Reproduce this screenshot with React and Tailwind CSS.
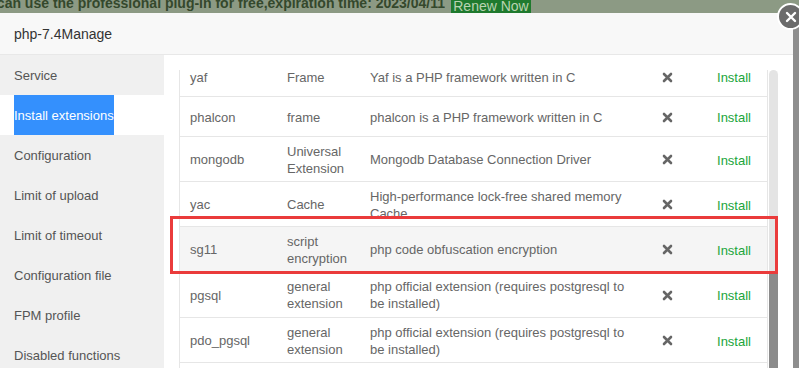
const rows = [
  { name: "yaf", type: ["Frame"], desc: ["Yaf is a PHP framework written in C"], h: "h-[40px]" },
  { name: "phalcon", type: ["frame"], desc: ["phalcon is a PHP framework written in C"], h: "h-[40px]" },
  { name: "mongodb", type: ["Universal", "Extension"], desc: ["Mongodb Database Connection Driver"], h: "h-[45px]" },
  { name: "yac", type: ["Cache"], desc: ["High-performance lock-free shared memory", "Cache"], h: "h-[45px]" },
  { name: "sg11", type: ["script", "encryption"], desc: ["php code obfuscation encryption"], h: "h-[45px]", active: true },
  { name: "pgsql", type: ["general", "extension"], desc: ["php official extension (requires postgresql to", "be installed)"], h: "h-[46px]" },
  { name: "pdo_pgsql", type: ["general", "extension"], desc: ["php official extension (requires postgresql to", "be installed)"], h: "h-[45px]" },
  { name: "imagick", type: ["general", "extension"], desc: ["Imagick image processing extension"], h: "h-[45px]" },
];

const menu = [
  "Service",
  "Install extensions",
  "Configuration",
  "Limit of upload",
  "Limit of timeout",
  "Configuration file",
  "FPM profile",
  "Disabled functions",
];

function Cross() {
  return (
    <svg width="11" height="11" viewBox="0 0 11 11">
      <path d="M2 2 L9 9 M9 2 L2 9" stroke="#666" strokeWidth="2.6" strokeLinecap="round" />
    </svg>
  );
}

export default function App() {
  return (
    <div className="relative w-[799px] h-[368px] overflow-hidden bg-[#8e8e8e] font-['Liberation_Sans',Arial,sans-serif]">
      {/* banner behind the shade */}
      <div className="h-[13px] flex bg-[#8c9a84] overflow-hidden">
        <div className="w-[445px] flex justify-end overflow-hidden">
          <span className="whitespace-nowrap text-[14px] font-bold leading-[14px] -mt-[4px] text-[#34482c]">
            you can use the professional plug-in for free,expiration time: 2023/04/11
          </span>
        </div>
        <div className="ml-[6px] w-[80px] bg-[#1f7a2e] text-[#b9d3b1] text-[14px] leading-[14px] -mt-[2px] pt-[1px] text-center">
          Renew Now
        </div>
      </div>

      <div className="flex h-[355px]">
        {/* dialog */}
        <div className="w-[793px] flex flex-col bg-white">
          <div className="h-[42px] shrink-0 bg-[#f8f8f8] border-b border-[#e8e8e8] flex items-center px-[14px] pt-[1px] text-[14px] text-[#333]">
            php-7.4Manage
          </div>
          <div className="flex flex-1 min-h-0">
            <div className="w-[164px] bg-[#f0f0f0] text-[13px] text-[#555]">
              {menu.map((m, i) =>
                i === 1 ? (
                  <div key={m} className="h-[40px] bg-white pl-[14px] flex">
                    <span className="bg-[#3490fd] text-white h-[40px] pt-[1px] flex items-center">{m}</span>
                  </div>
                ) : (
                  <div key={m} className="h-[40px] pl-[14px] pt-[1px] flex items-center">
                    {m}
                  </div>
                )
              )}
            </div>

            <div className="flex-1 flex pl-[15px] pr-[15px] pt-[15px]">
              <div className="flex-1 overflow-hidden">
                <div className="-mt-[13px] border-l border-r border-[#e6e6e6] text-[13px] text-[#666] leading-[17px]">
                  {rows.map((r) => (
                    <div
                      key={r.name}
                      className={`grid grid-cols-[97px_83px_288px_38px_1fr] items-center border-b border-[#e6e6e6] ${r.h} ${
                        r.active ? "bg-[#f5f5f5]" : ""
                      }`}
                    >
                      <div className="pl-[10px] pt-[1px]">{r.name}</div>
                      <div className="pl-[10px] pt-[1px]">
                        {r.type.map((t) => (
                          <div key={t}>{t}</div>
                        ))}
                      </div>
                      <div className="pl-[10px] pt-[1px]">
                        {r.desc.map((d) => (
                          <div key={d} className="whitespace-nowrap">{d}</div>
                        ))}
                      </div>
                      <div className="flex justify-center pt-[1px]">
                        <Cross />
                      </div>
                      <div className="text-right pr-[16px] text-[#20a53a] pt-[2px]">Install</div>
                    </div>
                  ))}
                </div>
              </div>
              {/* scrollbar */}
              <div className="w-[9px] ml-[1px] flex flex-col">
                <div className="h-[203px] bg-[#e4e4e4] rounded-t-[5px]" />
                <div className="flex-1 bg-[#8b8b8b]" />
              </div>
            </div>
          </div>
        </div>
        <div className="flex-1 bg-[#8e8e8e]" />
      </div>

      {/* highlight box */}
      <div className="absolute left-[170px] top-[216px] w-[608px] h-[58px] border-[3px] border-[#ea3b3b]" />

      {/* close button */}
      <div className="absolute left-[777px] top-[3px] w-[27px] h-[27px] rounded-full bg-[#6b6b6b] border-2 border-white flex items-center justify-center">
        <svg width="12" height="12" viewBox="0 0 12 12">
          <path d="M2 2 L10 10 M10 2 L2 10" stroke="white" strokeWidth="2.4" strokeLinecap="round" />
        </svg>
      </div>
    </div>
  );
}
